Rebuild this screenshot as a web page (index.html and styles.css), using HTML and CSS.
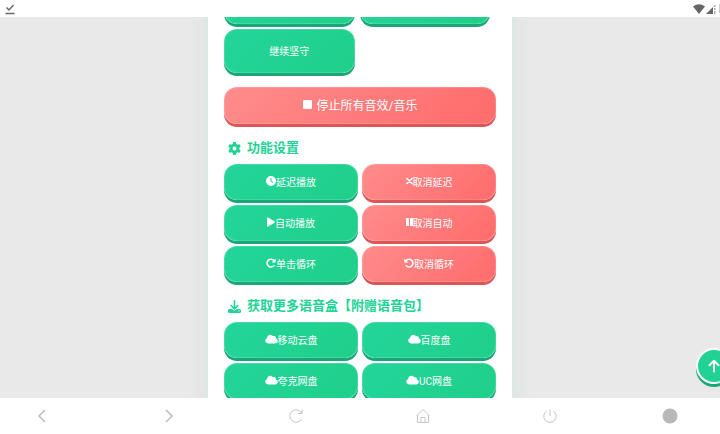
FILE: index.html
```
<!DOCTYPE html>
<html lang="zh-CN">
  <head>
    <meta charset="utf-8" />
    <meta name="viewport" content="width=device-width, initial-scale=1" />
    <title>语音盒</title>
    <link rel="stylesheet" href="styles.css">
  </head>
  <body>
    <svg class="sprite" aria-hidden="true">
      <symbol id="cloud" viewBox="0 0 640 512">
        <path d="M0 336c0 79.5 64.5 144 144 144H512c70.7 0 128-57.3 128-128c0-61.9-44-113.6-102.4-125.4c4.1-10.7 6.4-22.4 6.4-34.6c0-53-43-96-96-96c-19.7 0-38.1 6-53.3 16.2C367 64.2 315.3 32 256 32C167.6 32 96 103.6 96 192c0 2.7 .1 5.4 .2 8.1C40.2 219.8 0 273.2 0 336z" />
      </symbol>
    </svg>

    <header class="status-bar">
      <svg class="status-done" viewBox="0 0 10 12" aria-hidden="true">
        <path d="M1.5 4.5l2.5 2.500L8.500 2M.5 10.500h9" />
      </svg>
      <div class="status-right">
        <svg class="wifi" viewBox="0 0 12 10" aria-hidden="true"><path d="M6 10L0 2.5Q6-1.8 12 2.5z" /></svg>
        <svg class="signal" viewBox="0 0 10 10" aria-hidden="true">
          <path d="M0 10L7 3v7z" />
          <path class="faint" d="M7 3l2.5-2.5V3zM8 4h1.5v2H8zM8 7h1.5v3H8z" />
        </svg>
        <span class="battery"></span>
      </div>
    </header>

    <div class="viewport">
      <main class="panel">
        <div class="voices">
          <button class="btn" type="button" aria-label="语音一"></button>
          <button class="btn" type="button" aria-label="语音二"></button>
          <button class="btn" type="button">继续坚守</button>
        </div>

        <button class="btn red stop" type="button">
          <svg class="icon narrow" viewBox="0 0 9 9" aria-hidden="true"><rect width="9" height="9" rx="1.3" /></svg>
          停止所有音效/音乐
        </button>

        <h2 class="title">
          <svg class="icon" viewBox="0 0 512 512" aria-hidden="true">
            <path d="M495.9 166.6c3.2 8.7 .5 18.4-6.4 24.6l-43.3 39.4c1.1 8.3 1.7 16.8 1.7 25.4s-.6 17.1-1.7 25.4l43.3 39.4c6.9 6.2 9.6 15.9 6.4 24.6c-4.4 11.9-9.7 23.3-15.8 34.3l-4.7 8.1c-6.6 11-14 21.4-22.1 31.2c-5.9 7.2-15.7 9.6-24.5 6.8l-55.7-17.7c-13.4 10.3-28.2 18.9-44 25.4l-12.5 57.1c-2 9.1-9 16.3-18.2 17.8c-13.8 2.3-28 3.5-42.5 3.5s-28.7-1.2-42.5-3.5c-9.2-1.5-16.2-8.7-18.2-17.8l-12.5-57.1c-15.8-6.5-30.6-15.1-44-25.4L83.1 425.9c-8.8 2.8-18.6 .3-24.5-6.8c-8.1-9.8-15.5-20.2-22.1-31.2l-4.7-8.1c-6.1-11-11.4-22.4-15.8-34.3c-3.2-8.7-.5-18.4 6.4-24.6l43.3-39.4C64.6 273.1 64 264.6 64 256s.6-17.1 1.7-25.4L22.4 191.2c-6.9-6.2-9.6-15.9-6.4-24.6c4.4-11.9 9.7-23.3 15.8-34.3l4.7-8.1c6.6-11 14-21.4 22.1-31.2c5.9-7.2 15.7-9.6 24.5-6.8l55.7 17.7c13.4-10.3 28.2-18.9 44-25.4l12.5-57.1c2-9.1 9-16.3 18.2-17.8C227.3 1.2 241.5 0 256 0s28.7 1.2 42.5 3.5c9.2 1.5 16.2 8.7 18.2 17.8l12.5 57.1c15.8 6.5 30.6 15.1 44 25.4l55.7-17.7c8.8-2.8 18.6-.3 24.5 6.8c8.1 9.8 15.5 20.2 22.1 31.2l4.7 8.1c6.1 11 11.4 22.4 15.8 34.3zM256 336a80 80 0 1 0 0-160 80 80 0 1 0 0 160z" />
          </svg>
          功能设置
        </h2>
        <div class="actions">
          <button class="btn" type="button">
            <svg class="icon" viewBox="0 0 512 512" aria-hidden="true"><path fill-rule="evenodd" d="M256 0a256 256 0 1 1 0 512A256 256 0 1 1 256 0zM228 110v150q0 12 12 20l92 62q18 10 28-6t-4-28l-76-52V110q0-20-26-20t-26 20z" /></svg>延迟播放
          </button>
          <button class="btn red" type="button">
            <svg class="icon narrow" viewBox="0 0 7 10" aria-hidden="true"><path class="line" d="M1 2.5l5 5M6 2.5l-5 5" /></svg>取消延迟
          </button>
          <button class="btn" type="button">
            <svg class="icon play" viewBox="0 0 8 10" aria-hidden="true"><path d="M0 1.3Q0 0 1.2 .6L7.4 4.3Q8.4 5 7.4 5.7L1.2 9.4Q0 10 0 8.7z" /></svg>自动播放
          </button>
          <button class="btn red" type="button">
            <svg class="icon narrow" viewBox="0 0 7 10" aria-hidden="true"><rect y="1" width="3" height="8" rx=".5" /><rect x="4" y="1" width="3" height="8" rx=".5" /></svg>取消自动
          </button>
          <button class="btn" type="button">
            <svg class="icon" viewBox="0 0 10 10" aria-hidden="true"><path class="line" d="M7.8 7.8A3.9 3.9 0 1 1 7.8 2.4" /><path d="M9.7 .5V4.5H5.7z" /></svg>单击循环
          </button>
          <button class="btn red" type="button">
            <svg class="icon" viewBox="0 0 10 10" aria-hidden="true"><path class="line" d="M2.2 7.8A3.9 3.9 0 1 0 2.2 2.4" /><path d="M.3 .5V4.5H4.3z" /></svg>取消循环
          </button>
        </div>

        <h2 class="title">
          <svg class="icon" viewBox="0 0 512 512" aria-hidden="true">
            <path d="M288 32c0-17.7-14.3-32-32-32s-32 14.3-32 32V274.7l-73.4-73.4c-12.5-12.5-32.8-12.5-45.3 0s-12.5 32.8 0 45.3l128 128c12.5 12.5 32.8 12.5 45.3 0l128-128c12.5-12.5 12.5-32.8 0-45.3s-32.8-12.5-45.3 0L288 274.7V32zM64 352c-35.3 0-64 28.7-64 64v32c0 35.3 28.7 64 64 64H448c35.3 0 64-28.7 64-64V416c0-35.3-28.7-64-64-64H346.5l-45.3 45.3c-25 25-65.5 25-90.5 0L165.5 352H64zm368 56a24 24 0 1 1 0 48 24 24 0 1 1 0-48z" />
          </svg>
          获取更多语音盒【附赠语音包】
        </h2>
        <div class="actions">
          <button class="btn" type="button"><svg class="icon cloud" aria-hidden="true"><use href="#cloud" /></svg>移动云盘</button>
          <button class="btn" type="button"><svg class="icon cloud" aria-hidden="true"><use href="#cloud" /></svg>百度盘</button>
          <button class="btn" type="button"><svg class="icon cloud" aria-hidden="true"><use href="#cloud" /></svg>夸克网盘</button>
          <button class="btn" type="button"><svg class="icon cloud" aria-hidden="true"><use href="#cloud" /></svg>UC网盘</button>
        </div>
      </main>

      <button class="to-top" type="button" aria-label="返回顶部">
        <svg viewBox="0 0 12 14" aria-hidden="true"><path d="M6 12.5V2M1.5 6.2L6 1.7l4.5 4.5" /></svg>
      </button>
    </div>

    <nav class="browser-bar">
      <button type="button" aria-label="后退"><svg viewBox="0 0 16 16"><path class="bold" d="M11 2L5 8l6 6" /></svg></button>
      <button type="button" aria-label="前进"><svg viewBox="0 0 16 16"><path class="bold" d="M5 2l6 6-6 6" /></svg></button>
      <button type="button" aria-label="刷新"><svg viewBox="0 0 16 16"><path d="M13.5 11A6.2 6.2 0 1 1 13.5 5M14 1.5V5.5H10" /></svg></button>
      <button type="button" aria-label="主页"><svg viewBox="0 0 16 16"><path d="M1.5 8L8 1.5 14.5 8M2.5 7v7.5h11V7M6 14.5V9.5h4v5" /></svg></button>
      <button type="button" aria-label="退出"><svg viewBox="0 0 16 16"><path d="M8 1.5V8M4.8 2.9A6.2 6.2 0 1 0 11.2 2.9" /></svg></button>
      <button type="button" aria-label="菜单"><svg viewBox="0 0 16 16"><circle cx="8" cy="8" r="7.5" /></svg></button>
    </nav>
  </body>
</html>
```
FILE: styles.css
```
* {
  box-sizing: border-box;
}
body {
  margin: 0;
  height: 100vh;
  display: flex;
  flex-direction: column;
  overflow: hidden;
  background: #fff;
  font-family: Roboto, "Noto Sans CJK SC", sans-serif;
}
button {
  padding: 0;
  border: 0;
  background: none;
  font-family: inherit;
  cursor: pointer;
}
svg {
  display: block;
  flex: none;
}
.sprite {
  position: absolute;
  width: 0;
  height: 0;
}

/* status bar */
.status-bar {
  flex: none;
  height: 17px;
  padding-left: 5px;
  display: flex;
  align-items: center;
  justify-content: space-between;
}
.status-done {
  width: 10px;
  height: 12px;
  fill: none;
  stroke: #666;
  stroke-width: 1.5;
}
.status-right {
  display: flex;
  gap: 1px;
  fill: #666;
}
.wifi {
  width: 12px;
  height: 10px;
}
.signal {
  width: 10px;
  height: 10px;
}
.faint {
  fill: #aaa;
}
.battery {
  width: 1px;
  height: 9px;
  margin-left: 2px;
  background: #ccc;
}

/* page */
.viewport {
  position: relative;
  flex: 1;
  min-height: 0;
  overflow: hidden;
  background: #e9e9e9;
}
.panel {
  max-width: 304px;
  margin: -53px auto 0;
  padding: 16px;
  background: #fff;
  box-shadow: 0 0 20px rgba(32, 208, 144, 0.12);
}
.btn {
  display: flex;
  align-items: center;
  justify-content: center;
  height: 36px;
  padding-bottom: 2px;
  border: 1px solid rgba(255, 255, 255, 0.15);
  border-radius: 13px;
  background: linear-gradient(135deg, #23d59b, #1fcf89) border-box;
  box-shadow: 0 3px 0 #1ba67a;
  color: #fff;
  font-size: 10px;
}
.btn.red {
  background: linear-gradient(135deg, #ff8c8c, #ff6b6b) border-box;
  box-shadow: 0 3px 0 #dc5656;
}
.icon {
  width: 10px;
  height: 10px;
  fill: currentColor;
}
.icon.narrow {
  width: 7px;
}
.icon.play {
  width: 8px;
}
.icon.cloud {
  width: 13px;
}
.line {
  fill: none;
  stroke: currentColor;
  stroke-width: 1.6;
  stroke-linecap: round;
}
.voices {
  display: grid;
  grid-template-columns: repeat(2, 48%);
  gap: 5px;
}
.voices .btn {
  height: 44px;
}
.stop {
  width: 100%;
  height: 37px;
  margin-top: 14px;
  gap: 5px;
  font-size: 12px;
}
.stop .icon {
  width: 9px;
  height: 9px;
}
.title {
  display: flex;
  align-items: center;
  gap: 6px;
  margin: 14px 0 6px;
  padding-left: 4px;
  color: #22d396;
  font-size: 13px;
  line-height: 20px;
}
.title .icon {
  width: 13px;
  height: 13px;
}
.actions {
  display: grid;
  grid-template-columns: 1fr 1fr;
  gap: 5px 4px;
}
.to-top {
  position: absolute;
  right: -12px;
  bottom: 14px;
  display: flex;
  align-items: center;
  justify-content: center;
  width: 36px;
  height: 36px;
  border: 2px solid #fff;
  border-radius: 50%;
  background: #22d295;
  box-shadow: 0 3px 0 #1ba67a;
}
.to-top svg {
  width: 12px;
  height: 14px;
  fill: none;
  stroke: #fff;
  stroke-width: 2;
  stroke-linecap: round;
  stroke-linejoin: round;
}

/* browser toolbar */
.browser-bar {
  flex: none;
  height: 36px;
  padding-left: 34px;
  display: grid;
  grid-template-columns: repeat(4, 127fr) 120fr 58fr;
  align-items: center;
  justify-items: start;
}
.browser-bar svg {
  width: 16px;
  height: 16px;
  fill: none;
  stroke: #c6c6c6;
}
.browser-bar .bold {
  stroke: #bbb;
  stroke-width: 1.5;
}
.browser-bar circle {
  fill: #b8b8b8;
  stroke: none;
}
```
